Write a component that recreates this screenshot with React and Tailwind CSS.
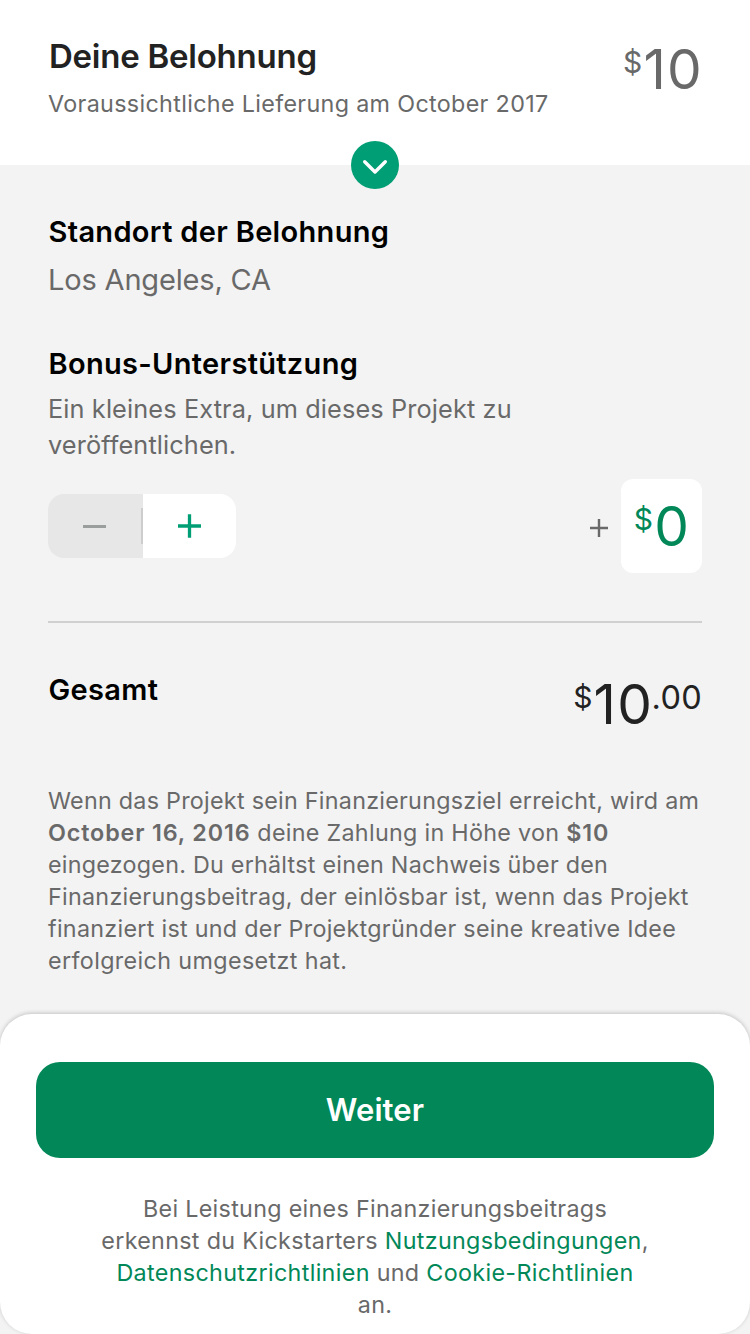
function Price({ whole, cents, className }) {
  return (
    <div className={`flex items-start leading-none whitespace-nowrap ${className}`}>
      <span className="mt-[4px] text-[30px] leading-[32px] tracking-[1.2px]">$</span>
      <span className="text-[55px] leading-[55px] tracking-[1.2px]">{whole}</span>
      {cents && <span className="-ml-[1.5px] mt-[4px] text-[32.5px] leading-[33px] tracking-[0.3px]">{cents}</span>}
    </div>
  );
}

function Line({ className = "", children }) {
  return <span className={`block whitespace-nowrap ${className}`}>{children}</span>;
}

function Link({ children }) {
  return (
    <a href="#" className="text-[#028858]">
      {children}
    </a>
  );
}

function Heading({ children }) {
  return <h2 className="pl-[0.5px] text-[29px] leading-9 font-semibold tracking-[0.32px] text-black">{children}</h2>;
}

export default function App() {
  return (
    <div className="flex h-[1334px] w-[750px] flex-col overflow-hidden bg-[#f3f3f3] font-['Inter',sans-serif] text-[#696969]">
      <header className="relative flex h-[165px] shrink-0 items-start justify-between bg-white px-12 pt-9">
        <div>
          <h1 className="pl-[1px] text-[33px] leading-10 font-semibold tracking-[-0.24px] text-[#222222]">Deine Belohnung</h1>
          <p className="mt-[12px] text-[23.3px] leading-8 tracking-[0.34px] whitespace-nowrap">
            Voraussichtliche Lieferung am October 2017
          </p>
        </div>
        <Price whole="10" className="-mr-px mt-[6px]" />
        <button className="absolute left-[351px] top-[141px] flex size-12 items-center justify-center rounded-full bg-[#009e74]">
          <svg width="48" height="48" viewBox="0 0 48 48" fill="none" stroke="#fff" strokeWidth="3.4" strokeLinecap="round" strokeLinejoin="round">
            <path d="M13.7 20.7 24 31 34.3 20.7" />
          </svg>
        </button>
      </header>

      <main className="flex-1 px-12">
        <section className="pt-[49px]">
          <Heading>Standort der Belohnung</Heading>
          <p className="mt-3 text-[29px] leading-9 tracking-[-0.17px]">Los Angeles, CA</p>
        </section>

        <section className="mt-12">
          <Heading>Bonus-Unterstützung</Heading>
          <p className="mt-[9px] text-[25.3px] leading-9 tracking-[0.12px]">
            <Line>Ein kleines Extra, um dieses Projekt zu</Line>
            <Line>veröffentlichen.</Line>
          </p>
          <div className="mt-4 flex h-[94px] items-center">
            <div className="flex h-16 w-[188px] overflow-hidden rounded-2xl">
              <button className="flex w-[95px] items-center justify-end bg-[#e7e7e7]">
                <span className="mr-[35px] h-[3px] w-[23px] bg-[#9a9f9d]" />
                <span className="h-9 w-[2px] bg-[#cdcdcd]" />
              </button>
              <button className="flex flex-1 items-center justify-center bg-white">
                <svg width="24" height="24" viewBox="0 0 24 24" stroke="#009e74" strokeWidth="3.3">
                  <path d="M0 12h23M11.5 0.3v23.4" />
                </svg>
              </button>
            </div>
            <svg className="ml-auto mr-[13px] mt-[4px]" width="18" height="18" viewBox="0 0 18 18" stroke="#696969" strokeWidth="2.4">
              <path d="M0 9h18M9 0v18" />
            </svg>
            <div className="flex h-[94px] w-[81px] items-start justify-center rounded-xl bg-white pl-[1px] text-[#028858]">
              <Price whole="0" className="mt-[20px]" />
            </div>
          </div>
        </section>

        <hr className="mt-12 border-t-2 border-[#d0d0d0]" />

        <section className="mt-[49px] flex h-[56px] items-start justify-between">
          <Heading>Gesamt</Heading>
          <Price whole="10" cents=".00" className="mt-[5px] text-[#222222]" />
        </section>

        <p className="mt-[57px] text-[23.3px] leading-8">
          <Line className="tracking-[0.27px]">Wenn das Projekt sein Finanzierungsziel erreicht, wird am</Line>
          <Line className="tracking-[0.3px]">
            <b className="font-semibold tracking-[0.87px]">October 16, 2016</b> deine Zahlung in Höhe von{" "}
            <b className="font-semibold tracking-[0.87px]">$10</b>
          </Line>
          <Line className="tracking-[0.25px]">eingezogen. Du erhältst einen Nachweis über den</Line>
          <Line className="tracking-[0.28px]">Finanzierungsbeitrag, der einlösbar ist, wenn das Projekt</Line>
          <Line className="tracking-[0.29px]">finanziert ist und der Projektgründer seine kreative Idee</Line>
          <Line className="tracking-[0.38px]">erfolgreich umgesetzt hat.</Line>
        </p>
      </main>

      <footer className="h-80 shrink-0 rounded-[32px] bg-white px-9 pt-12 shadow-[0_-1px_4px_rgba(0,0,0,0.2)]">
        <button className="block h-24 w-full rounded-3xl bg-[#028858] text-[31px] font-semibold tracking-[0.1px] text-white">Weiter</button>
        <p className="mt-[35px] text-center text-[23.3px] leading-8 tracking-[0.31px]">
          <Line>Bei Leistung eines Finanzierungsbeitrags</Line>
          <Line>
            erkennst du Kickstarters <Link>Nutzungsbedingungen</Link>,
          </Line>
          <Line className="tracking-[0.34px]">
            <Link>Datenschutzrichtlinien</Link> und <Link>Cookie-Richtlinien</Link>
          </Line>
          <Line>an.</Line>
        </p>
      </footer>
    </div>
  );
}
